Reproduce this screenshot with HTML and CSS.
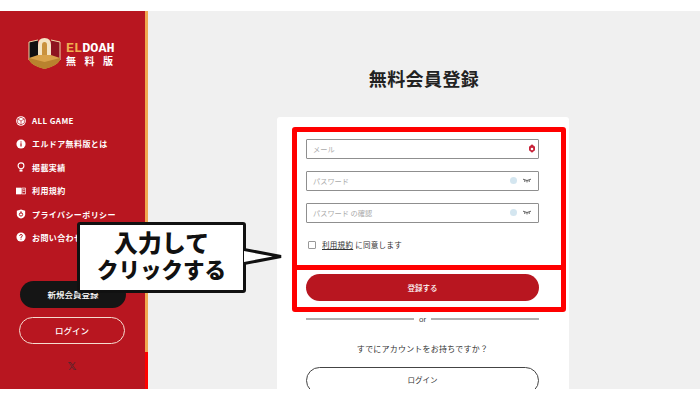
FILE: index.html
```html
<!DOCTYPE html>
<html lang="ja">
<head>
    <meta charset="UTF-8">
    <meta name="viewport" content="width=device-width, initial-scale=1.0">
    <title>無料会員登録</title>
    <link rel="stylesheet" href="styles.css">
</head>
<body>
    <div class="app">
        <aside class="sidebar">
            <div class="logo">
                <svg class="logo-mark" width="33" height="33" viewBox="0 0 33 33">
                    <path d="M1 5 L10 3 L10 21 L1 21 Z" fill="#111"/>
                    <path d="M23 3 L32 5 L32 21 L23 21 Z" fill="#8e1420"/>
                    <path d="M1 5 L10 3 M23 3 L32 5 M1 5 V23 M32 5 V23" stroke="#f0d8a8" stroke-width="1" fill="none"/>
                    <path d="M10 21 V8 Q10 1 16.500 1 Q23 1 23 8 V21 Z" fill="#f4e4c4"/>
                    <path d="M14 21 V8 Q14 5 16.500 5 Q19 5 19 8 V21 Z" fill="#c9923e"/>
                    <path d="M1 21 L10 18 H23 L32 21 V23 Q29 29 16.500 32 Q4 29 1 23 Z" fill="#d9a24a"/>
                    <path d="M1 21 L16.500 25 L32 21 V23 Q29 29 16.500 32 Q4 29 1 23 Z" fill="#b9822e"/>
                </svg>
                <div class="logo-text">
                    <div class="logo-name"><span class="logo-el">EL</span>DOAH</div>
                    <div class="logo-sub">無料版</div>
                </div>
            </div>
            <nav class="menu">
                <a class="menu-item">
                    <svg class="menu-icon" viewBox="0 0 12 12"><circle cx="6" cy="6" r="5.800" fill="#fff"/><path d="M6 1.500 10 3.500v5L6 10.500 2 8.500v-5zM2 3.500 6 6l4-2.500M6 6v4.500" stroke="#b81620" stroke-width=".8" fill="none"/></svg>
                    ALL GAME
                </a>
                <a class="menu-item">
                    <svg class="menu-icon" viewBox="0 0 12 12"><circle cx="6" cy="6" r="5.500" fill="#fff"/><path d="M6 5v4M6 3v1.200" stroke="#b81620" stroke-width="1.500"/></svg>
                    エルドア無料版とは
                </a>
                <a class="menu-item">
                    <svg class="menu-icon" viewBox="0 0 12 12"><circle cx="6" cy="4.500" r="3.500" fill="none" stroke="#fff" stroke-width="1.300"/><path d="M4.200 9h3.600v2.500H4.200z" fill="#fff"/></svg>
                    掲載実績
                </a>
                <a class="menu-item">
                    <svg class="menu-icon" viewBox="0 0 12 12"><path d="M0 2h6.500v8H0z" fill="#fff"/><path d="M7 2.500h4.500v7H7zM8 4.500h2.500M8 6.500h2.500" fill="none" stroke="#fff" stroke-width=".9"/></svg>
                    利用規約
                </a>
                <a class="menu-item">
                    <svg class="menu-icon" viewBox="0 0 12 12"><path d="M6 .5 11 2v4.500Q11 10 6 11.500 1 10 1 6.500V2z" fill="#fff"/><circle cx="6" cy="6.500" r="2" fill="none" stroke="#b81620" stroke-width="1.200"/><path d="M6 2.500v3" stroke="#b81620"/></svg>
                    プライバシーポリシー
                </a>
                <a class="menu-item">
                    <svg class="menu-icon" viewBox="0 0 12 12"><circle cx="6" cy="6" r="5.500" fill="#fff"/><path d="M4.300 4.600Q4.500 3 6 3 7.700 3 7.700 4.400 7.700 5.400 6 6.200V7.200M6 8v1.200" stroke="#b81620" stroke-width="1.200" fill="none"/></svg>
                    お問い合わせ
                </a>
            </nav>
            <a class="side-btn side-btn-dark">新規会員登録</a>
            <a class="side-btn side-btn-line">ログイン</a>
            <div class="side-x">𝕏</div>
        </aside>
        <div class="side-strip"></div>

        <main class="main">
            <h1 class="title">無料会員登録</h1>
            <section class="card">
                <div class="field">
                    <span class="field-label">メール</span>
                    <svg class="field-key" width="6" height="9" viewBox="0 0 7 10"><path d="M3.500 0 7 3v4L3.500 10 0 7V3z" fill="#c8243a"/><circle cx="3.500" cy="5.500" r="1.500" fill="#fff"/></svg>
                </div>
                <div class="field">
                    <span class="field-label">パスワード</span>
                    <span class="field-dot"></span>
                    <svg class="field-eye" width="8" height="5" viewBox="0 0 9 5"><path d="M0 1q4.500 3 9 0M2 2.200v2M4.500 2.700v2M7 2.200v2" stroke="#222" stroke-width=".8" fill="none"/></svg>
                </div>
                <div class="field">
                    <span class="field-label">パスワード の確認</span>
                    <span class="field-dot"></span>
                    <svg class="field-eye" width="8" height="5" viewBox="0 0 9 5"><path d="M0 1q4.500 3 9 0M2 2.200v2M4.500 2.700v2M7 2.200v2" stroke="#222" stroke-width=".8" fill="none"/></svg>
                </div>
                <label class="agree">
                    <span class="check"></span>
                    <span class="agree-text"><u>利用規約</u> に同意します</span>
                </label>
                <a class="submit">登録する</a>
                <div class="or"><span>or</span></div>
                <p class="have-account">すでにアカウントをお持ちですか？</p>
                <a class="login-btn">ログイン</a>
            </section>
        </main>
    </div>

    <!-- annotation layer -->
    <div class="mark mark-form"></div>
    <div class="mark mark-submit"></div>
    <div class="callout"><span class="callout-top">入力して</span><br>クリックする</div>
    <svg class="callout-tail" width="40" height="17" viewBox="0 0 40 17">
        <path d="M0 1.500 37 8.500 0 15.500" fill="#fff" stroke="#111" stroke-width="3"/>
    </svg>
</body>
</html>
```

FILE: styles.css
```css
body {
    margin: 0;
    width: 700px;
    height: 400px;
    background: #ffffff;
    font-family: "Noto Sans CJK JP", "Noto Sans", sans-serif;
    overflow: hidden;
}
.app {
    display: flex;
    height: 378px;
    margin-top: 11px;
    background: #f0f0f0;
}
.sidebar {
    width: 145px;
    flex-shrink: 0;
    background: #b81620;
    display: flex;
    flex-direction: column;
    align-items: flex-start;
    color: #ffffff;
}
.side-strip {
    width: 3px;
    flex-shrink: 0;
    background: linear-gradient(#f0a850 0, #f0a850 341px, #ff0000 341px);
}
.logo {
    display: flex;
    gap: 5px;
    height: 42px;
    margin: 26px 0 0 28px;
}
.logo-name {
    font-family: "Liberation Mono", monospace;
    font-size: 13.500px;
    font-weight: 700;
    line-height: 13px;
    margin-top: 5px;
}
.logo-el {
    color: #f0b050;
}
.logo-sub {
    font-size: 10px;
    font-weight: 700;
    line-height: 12px;
    letter-spacing: 8.500px;
    white-space: nowrap;
}
.menu {
    display: flex;
    flex-direction: column;
    gap: 6.400px;
    margin: 33px 0 0 16px;
}
.menu-item {
    display: flex;
    align-items: center;
    gap: 6px;
    height: 17px;
    font-size: 8px;
    font-weight: 700;
    letter-spacing: 0.400px;
    white-space: nowrap;
}
.menu-icon {
    width: 10px;
    height: 10px;
}
.side-btn {
    display: flex;
    align-items: center;
    justify-content: center;
    box-sizing: border-box;
    width: 106px;
    height: 27px;
    border-radius: 14px;
    font-size: 8.500px;
    font-weight: 500;
}
.side-btn-dark {
    background: #151515;
    margin: 35px 0 0 20px;
}
.side-btn-line {
    border: 1px solid #f6dcd0;
    margin: 9px 0 0 19px;
}
.side-x {
    width: 106px;
    margin: 16px 0 0 19px;
    text-align: center;
    font-family: "DejaVu Sans", sans-serif;
    font-size: 11px;
    font-weight: 700;
    color: #57252c;
}
.main {
    flex: 1;
    display: flex;
    flex-direction: column;
    align-items: center;
    overflow: hidden;
}
.title {
    margin: 56px 0 0 0;
    font-size: 18px;
    font-weight: 700;
    line-height: 23px;
    color: #222222;
    letter-spacing: 0.400px;
}
.card {
    width: 292px;
    height: 272px;
    margin: 27px 0 0 -2px;
    flex-shrink: 0;
    box-sizing: border-box;
    padding: 22px 30px 0 29px;
    background: #ffffff;
    border-radius: 3px 3px 0 0;
}
.field {
    display: flex;
    align-items: center;
    box-sizing: border-box;
    height: 19.500px;
    margin-bottom: 12.500px;
    padding: 0 7px 0 6px;
    border: 1px solid #8f8f8f;
    border-radius: 1px;
}
.field-label {
    flex: 1;
    font-size: 7.200px;
    color: #aaaaaa;
}
.field-key {
    margin-right: -4px;
}
.field-dot {
    width: 7px;
    height: 7px;
    border-radius: 50%;
    background: #d4e6f0;
    margin-right: 6px;
}
.agree {
    display: flex;
    align-items: center;
    gap: 6px;
    margin: 16px 0 0 2px;
    height: 12px;
}
.check {
    box-sizing: border-box;
    width: 8px;
    height: 8px;
    border: 1px solid #999999;
    border-radius: 1px;
}
.agree-text {
    font-size: 7.500px;
    color: #333333;
    letter-spacing: 0.300px;
}
.submit {
    display: flex;
    align-items: center;
    justify-content: center;
    height: 27px;
    margin-top: 23px;
    border-radius: 14px;
    background: #b81620;
    color: #ffffff;
    font-size: 7.500px;
    font-weight: 500;
}
.or {
    display: flex;
    align-items: center;
    gap: 5px;
    margin-top: 12px;
    height: 13px;
    font-family: "Liberation Sans", sans-serif;
    font-size: 8px;
    color: #444444;
}
.or::before,
.or::after {
    content: "";
    flex: 1;
    height: 2px;
    background: #b0b0b0;
}
.have-account {
    margin: 17px 0 0 0;
    text-align: center;
    font-size: 8px;
    line-height: 12px;
    color: #333333;
    letter-spacing: 0.200px;
}
.login-btn {
    display: flex;
    align-items: center;
    justify-content: center;
    box-sizing: border-box;
    height: 27px;
    margin-top: 12px;
    padding-bottom: 2px;
    border: 1px solid #444444;
    border-radius: 14px;
    font-size: 7.500px;
    color: #333333;
}
.mark {
    position: absolute;
    box-sizing: border-box;
    border: 5px solid #ff0000;
    border-radius: 3px;
}
.mark-form {
    left: 292px;
    top: 127px;
    width: 274px;
    height: 143px;
}
.mark-submit {
    left: 292px;
    top: 265px;
    width: 274px;
    height: 47px;
}
.callout {
    position: absolute;
    left: 77px;
    top: 222px;
    box-sizing: border-box;
    width: 169px;
    height: 71px;
    padding-top: 4px;
    background: #ffffff;
    border: 3px solid #111111;
    border-radius: 3px;
    text-align: center;
    font-size: 21.500px;
    font-weight: 900;
    line-height: 26px;
    color: #111111;
}
.callout-top {
    font-size: 24px;
}
.callout-tail {
    position: absolute;
    left: 244px;
    top: 248px;
}
```
